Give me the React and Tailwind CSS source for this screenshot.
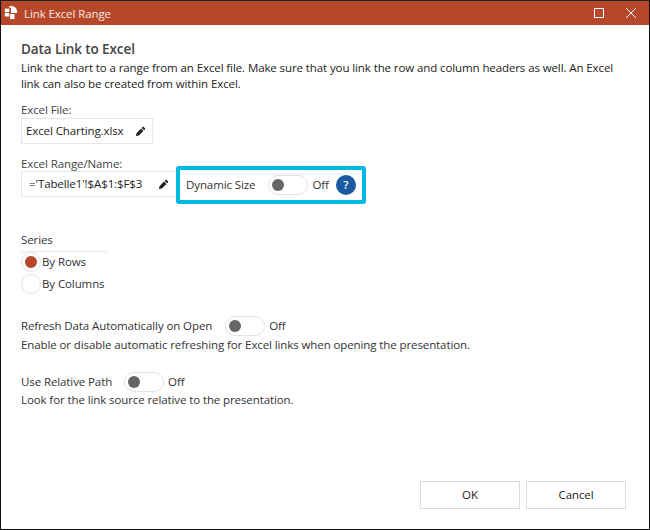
import React from 'react';

const font = { fontFamily: '"Open Sans", "Noto Sans", sans-serif' };

const Pencil = ({ className }) => (
  <svg viewBox="0 0 12 12" className={className} fill="#222">
    <path d="M8.2 1.2a1 1 0 0 1 1.4 0l1.2 1.2a1 1 0 0 1 0 1.4L9.9 4.7 7.3 2.1zM6.6 2.8l2.6 2.6-5 5L1 11l.6-3.2z" />
  </svg>
);

const Toggle = () => (
  <div className="w-[40px] h-[20px] rounded-full border border-[#e3e3e3] bg-white flex items-center pl-[3px]">
    <div className="w-[12px] h-[12px] rounded-full bg-[#666666]" />
  </div>
);

const Logo = () => (
  <svg viewBox="0 0 16 16" className="w-[14px] h-[14px]" fill="#fff">
    <path d="M6 0h3a7 7 0 0 1 6 7v1H8V2H6z" />
    <rect x="1" y="3" width="5" height="4" />
    <rect x="1" y="8" width="5" height="4" />
    <rect x="7" y="9" width="5" height="6" />
  </svg>
);

const Radio = ({ checked, label }) => (
  <div className="flex items-center h-[22px]">
    <div className="w-[20px] h-[20px] rounded-full border border-[#e3e3e3] flex items-center justify-center">
      {checked && <div className="w-[12px] h-[12px] rounded-full bg-[#b7472a]" />}
    </div>
    <span className="ml-[1px]">{label}</span>
  </div>
);

export default function App() {
  return (
    <div
      style={font}
      className="w-[650px] h-[530px] flex flex-col bg-white border border-[#111] border-t-[#222] text-[11.5px] leading-[16px] tracking-[-0.1px] text-[#333] overflow-hidden"
    >
      <div className="h-[24px] shrink-0 bg-[#b7472a] text-white flex items-center pl-[3px] pr-[13px]">
        <Logo />
        <span className="ml-[6px] mt-[2px] text-[#f7e9e4]">Link Excel Range</span>
        <svg viewBox="0 0 10 10" className="ml-auto w-[10px] h-[10px]" fill="none" stroke="#fff">
          <rect x="0.5" y="0.5" width="9" height="9" />
        </svg>
        <svg viewBox="0 0 10 10" className="ml-[22px] w-[10px] h-[10px]" fill="none" stroke="#fff">
          <path d="M0 0l10 10M10 0L0 10" />
        </svg>
      </div>

      <div className="flex-1 flex flex-col pl-[20px] pr-[23px] pt-[15px] pb-[20px]">
        <h1 className="text-[13.5px] leading-[18px] font-semibold text-[#444]">Data Link to Excel</h1>
        <p className="mt-[2px] leading-[16px] text-[#222]">
          Link the chart to a range from an Excel file. Make sure that you link the row and column headers as well. An Excel
          <br />
          link can also be created from within Excel.
        </p>

        <div className="mt-[10px] text-[#444]">Excel File:</div>
        <div className="w-[132px] h-[26px] border border-[#e6e6e6] flex items-center pl-[4px] pr-[6px] text-[#222]">
          <span>Excel Charting.xlsx</span>
          <Pencil className="ml-auto w-[11px] h-[11px]" />
        </div>

        <div className="mt-[12px] text-[#444]">Excel Range/Name:</div>
        <div className="flex items-start -mt-[5px]">
          <div className="mt-[4px] w-[157px] h-[26px] border border-[#e6e6e6] border-r-0 flex items-center pl-[7px] pr-[9px] text-[#222]">
            <span>='Tabelle1'!$A$1:$F$3</span>
            <Pencil className="ml-auto w-[11px] h-[11px]" />
          </div>
          <div className="-ml-[2px] -mt-[1px] w-[190px] h-[38px] border-[4px] border-[#00b8e0] rounded-[3px] bg-white flex items-center pl-[6px]">
            <span>Dynamic Size</span>
            <div className="ml-[13px]"><Toggle /></div>
            <span className="ml-[4px]">Off</span>
            <div className="ml-[7px] w-[20px] h-[20px] rounded-full bg-[#1b5aa0] text-white font-semibold flex items-center justify-center">?</div>
          </div>
        </div>

        <div className="mt-[28px] w-[86px] border-b border-[#eaeaea] pb-[3px]">Series</div>
        <div className="-mt-[1px]">
          <Radio checked label="By Rows" />
          <Radio label="By Columns" />
        </div>

        <div className="mt-[21px] flex items-center h-[20px]">
          <span>Refresh Data Automatically on Open</span>
          <div className="ml-[13px]"><Toggle /></div>
          <span className="ml-[4px]">Off</span>
        </div>
        <p className="mt-[1px]">Enable or disable automatic refreshing for Excel links when opening the presentation.</p>

        <div className="mt-[19px] flex items-center h-[20px]">
          <span>Use Relative Path</span>
          <div className="ml-[12px]"><Toggle /></div>
          <span className="ml-[4px]">Off</span>
        </div>
        <p>Look for the link source relative to the presentation.</p>

        <div className="mt-auto flex justify-end gap-[6px]">
          <button className="w-[100px] h-[28px] border border-[#dcdcdc] text-[#222] font-medium">OK</button>
          <button className="w-[100px] h-[28px] border border-[#dcdcdc] text-[#222] font-medium">Cancel</button>
        </div>
      </div>
    </div>
  );
}
